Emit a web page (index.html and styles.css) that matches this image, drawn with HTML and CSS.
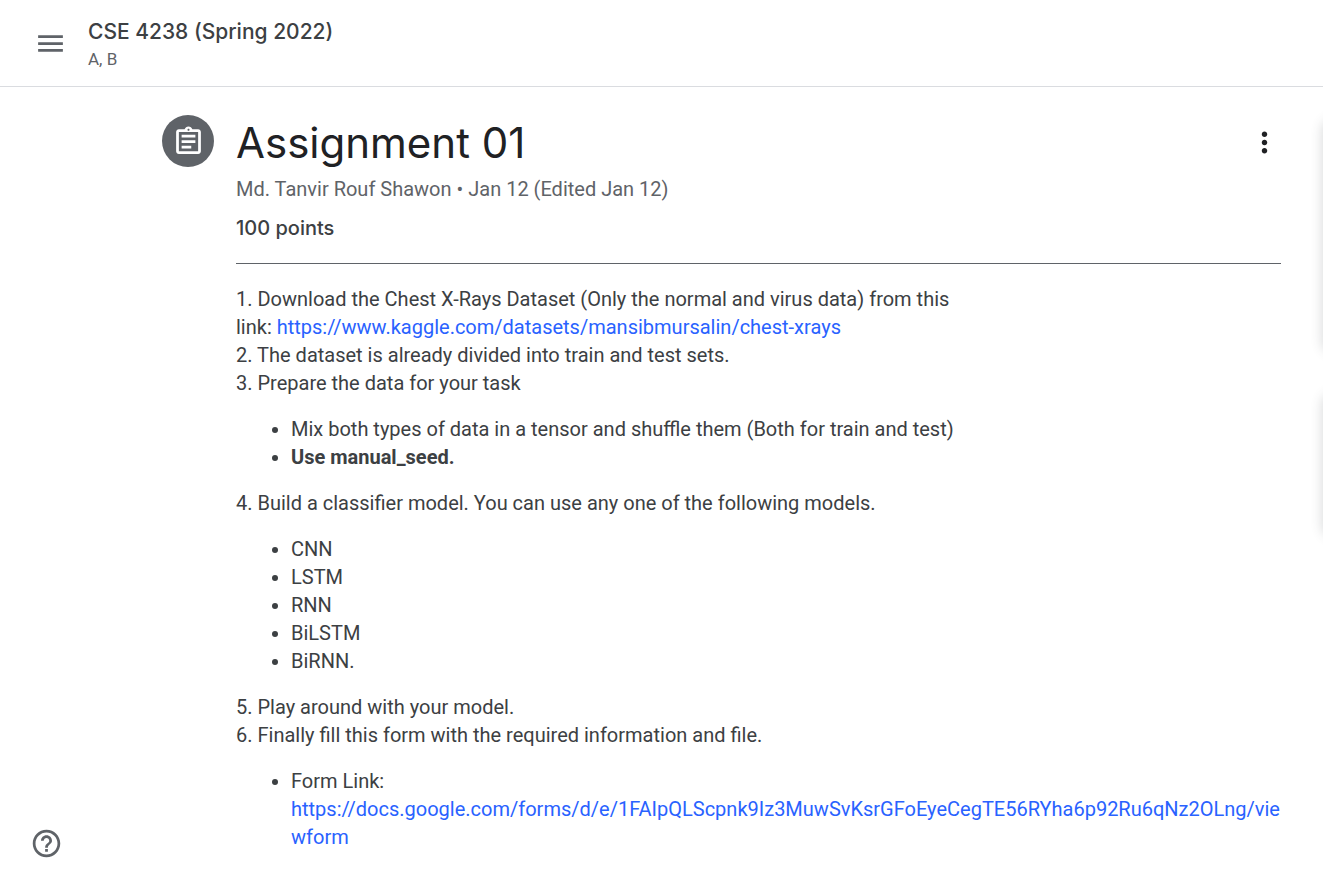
FILE: index.html
```html
<!DOCTYPE html>
<html lang="en">
<head>
<meta charset="utf-8">
<meta name="viewport" content="width=device-width, initial-scale=1">
<title>Assignment 01</title>
<link rel="stylesheet" href="styles.css">
</head>
<body>
<header class="topbar">
  <button class="icon-button" type="button" aria-label="Main menu">
    <svg class="icon" viewBox="0 0 24 24"><path d="M3 18h18v-2H3v2zm0-5h18v-2H3v2zm0-7v2h18V6H3z"/></svg>
  </button>
  <div class="course">
    <a class="course-name" href="#">CSE 4238 (Spring 2022)</a>
    <span class="course-section">A, B</span>
  </div>
</header>
<div class="page">
  <main class="assignment">
    <div class="badge">
      <svg class="icon" viewBox="0 0 24 24"><path d="M7 15h7v2H7zm0-4h10v2H7zm0-4h10v2H7zm12-4h-4.18C14.4 1.84 13.3 1 12 1c-1.3 0-2.4.84-2.82 2H5c-1.1 0-2 .9-2 2v14c0 1.100.9 2 2 2h14c1.100 0 2-.9 2-2V5c0-1.100-.9-2-2-2zm-7-.25c.41 0 .75.34.75.75s-.34.75-.75.75-.75-.34-.75-.75.34-.75.75-.75zM19 19H5V5h14v14z"/></svg>
    </div>
    <div class="content">
      <div class="summary">
        <div class="title-row">
          <h1 class="title">Assignment 01</h1>
          <button class="icon-button more" type="button" aria-label="More options">
            <svg class="icon" viewBox="0 0 24 24"><path d="M12 8c1.100 0 2-.9 2-2s-.9-2-2-2-2 .9-2 2 .9 2 2 2zm0 2c-1.100 0-2 .9-2 2s.9 2 2 2 2-.9 2-2-.9-2-2-2zm0 6c-1.100 0-2 .9-2 2s.9 2 2 2 2-.9 2-2-.9-2-2-2z"/></svg>
          </button>
        </div>
        <p class="byline">Md. Tanvir Rouf Shawon • Jan 12 (Edited Jan 12)</p>
        <p class="points">100 points</p>
      </div>
      <div class="instructions">
        <p>1. Download the Chest X-Rays Dataset (Only the normal and virus data) from this<br>link: <a href="https://www.kaggle.com/datasets/mansibmursalin/chest-xrays">https://www.kaggle.com/datasets/mansibmursalin/chest-xrays</a><br>2. The dataset is already divided into train and test sets.<br>3. Prepare the data for your task</p>
        <ul>
          <li>Mix both types of data in a tensor and shuffle them (Both for train and test)</li>
          <li><b>Use manual_seed.</b></li>
        </ul>
        <p>4. Build a classifier model. You can use any one of the following models.</p>
        <ul>
          <li>CNN</li>
          <li>LSTM</li>
          <li>RNN</li>
          <li>BiLSTM</li>
          <li>BiRNN.</li>
        </ul>
        <p>5. Play around with your model.<br>6. Finally fill this form with the required information and file.</p>
        <ul>
          <li>Form Link:<br><a href="https://docs.google.com/forms/">https://docs.google.com/forms/d/e/1FAIpQLScpnk9Iz3MuwSvKsrGFoEyeCegTE56RYha6p92Ru6qNz2OLng/viewform</a></li>
        </ul>
      </div>
    </div>
  </main>
  <aside class="side">
    <div class="card card-work"></div>
    <div class="card card-comments"></div>
  </aside>
</div>
<button class="icon-button help" type="button" aria-label="Help">
  <svg class="icon" viewBox="0 0 24 24"><path d="M11 18h2v-2h-2v2zm1-16C6.480 2 2 6.480 2 12s4.480 10 10 10 10-4.480 10-10S17.520 2 12 2zm0 18c-4.410 0-8-3.590-8-8s3.590-8 8-8 8 3.590 8 8-3.590 8-8 8zm0-14c-2.210 0-4 1.790-4 4h2c0-1.100.9-2 2-2s2 .9 2 2c0 2-3 1.750-3 5h2c0-2.250 3-2.500 3-5 0-2.210-1.790-4-4-4z"/></svg>
</button>
</body>
</html>
```

FILE: styles.css
```css
* {
  box-sizing: border-box;
}

body {
  margin: 0;
  background: #fff;
  color: #3c4043;
  font-family: Roboto, "Liberation Sans", sans-serif;
  font-size: 20px;
  line-height: 28px;
  overflow-x: hidden;
}

p, h1, ul {
  margin: 0;
}

.icon {
  display: block;
  width: 33px;
  height: 33px;
  fill: currentColor;
}

.icon-button {
  padding: 0;
  border: 0;
  background: none;
  color: #5f6368;
  cursor: pointer;
}

.topbar {
  display: flex;
  align-items: center;
  gap: 21px;
  padding: 16px 34px;
  border-bottom: 1px solid #dadce0;
}

.course {
  display: flex;
  flex-direction: column;
}

.course-name {
  color: #3c4043;
  font-family: Inter, Roboto, sans-serif;
  font-size: 21px;
  font-weight: 500;
  line-height: 32px;
  text-decoration: none;
}

.course-section {
  color: #5f6368;
  font-size: 17px;
  line-height: 22px;
}

.page {
  display: flex;
  align-items: flex-start;
  overflow-x: clip;
}

.assignment {
  display: flex;
  flex: 1;
  gap: 22px;
  min-width: 0;
  padding: 28px 42px 34px 162px;
}

.badge {
  display: flex;
  flex: none;
  align-items: center;
  justify-content: center;
  width: 52px;
  height: 52px;
  border-radius: 50%;
  background: #5f6368;
  color: #fff;
}

.content {
  flex: 1;
  min-width: 0;
}

.summary {
  padding-bottom: 21px;
  border-bottom: 1px solid #5f6368;
}

.title-row {
  display: flex;
  align-items: center;
  justify-content: space-between;
}

.title {
  color: #202124;
  font-family: Inter, Roboto, sans-serif;
  font-size: 42px;
  font-weight: 400;
  line-height: 55px;
}

.more {
  color: #202124;
}

.byline {
  padding-top: 5px;
  color: #5f6368;
}

.points {
  padding-top: 11px;
  font-family: Inter, Roboto, sans-serif;
  font-size: 20px;
  font-weight: 500;
}

.instructions {
  display: flex;
  flex-direction: column;
  gap: 18px;
  padding-top: 21px;
}

.instructions ul {
  padding-left: 55px;
}

.instructions a {
  color: #2962ff;
  overflow-wrap: anywhere;
  text-decoration: none;
}

.side {
  display: flex;
  flex: none;
  flex-direction: column;
  gap: 42px;
  width: 410px;
  margin-right: -410px;
  padding-top: 31px;
}

.card {
  border-radius: 11px;
  box-shadow: 0 2px 12px 1px #3c404330;
}

.card-work {
  height: 232px;
}

.card-comments {
  height: 142px;
}

.help {
  position: fixed;
  bottom: 26px;
  left: 30px;
}
```
